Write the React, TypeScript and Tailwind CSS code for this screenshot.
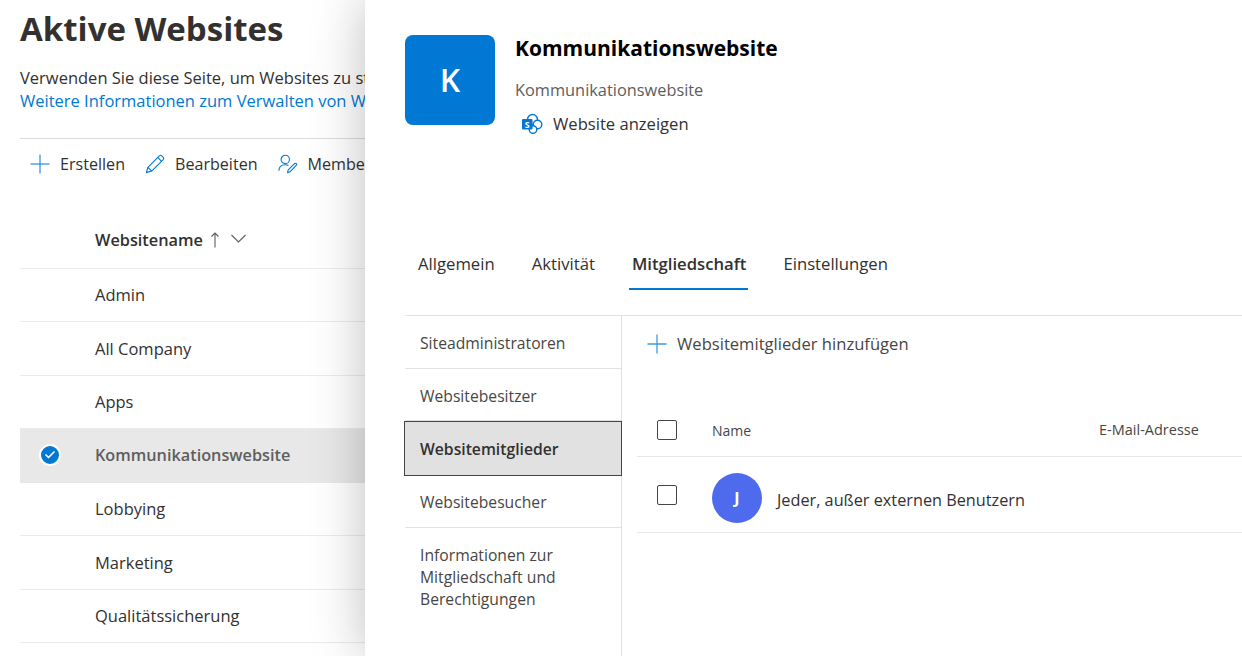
import React from "react";
import { Check } from "lucide-react";

const font = "font-['Open_Sans','Noto_Sans',sans-serif]";

function PlusIcon({ color = "#0078d4", width = 1 }: { color?: string; width?: number }) {
  return (
    <svg width="20" height="20" viewBox="0 0 20 20" className="shrink-0" stroke={color} strokeWidth={width} fill="none">
      <path d="M10 0.5 V19.5 M0.5 10 H19.5" />
    </svg>
  );
}

function Pencil() {
  return (
    <svg width="20" height="22" viewBox="0 0 22 22" fill="none" stroke="#0078d4" strokeWidth="1.2" strokeLinejoin="round" className="shrink-0">
      <path d="M1.5 20.5 L3.2 14.6 L15.8 2 Q17 1 18.2 1.8 L20.1 3.7 Q21 5 20 6.2 L7.4 18.8 Z" />
      <path d="M3.2 14.6 L7.4 18.8 M14 3.8 L18.2 8" />
    </svg>
  );
}

function MemberIcon() {
  return (
    <svg width="20" height="22" viewBox="0 0 22 22" fill="none" stroke="#0078d4" strokeWidth="1.2" strokeLinejoin="round" className="shrink-0">
      <circle cx="8" cy="6" r="4.6" />
      <path d="M1 18.5 C1 14 4 11.8 8 11.8 C9.4 11.8 10.5 12 11.5 12.6" />
      <path d="M10.5 20.5 L11.2 17.5 L18.5 10.4 Q19.4 9.8 20.2 10.6 Q21 11.5 20.3 12.3 L13.2 19.6 Z" />
    </svg>
  );
}

function SharePoint() {
  return (
    <svg width="22" height="22" viewBox="0 0 22 22" className="shrink-0">
      <circle cx="11.5" cy="6.5" r="5" fill="#ffffff" stroke="#0078d4" strokeWidth="1.4" />
      <circle cx="16.5" cy="11.5" r="4.3" fill="#ffffff" stroke="#0078d4" strokeWidth="1.4" />
      <circle cx="12" cy="16.5" r="3.8" fill="#ffffff" stroke="#0078d4" strokeWidth="1.4" />
      <rect x="1" y="6" width="10.5" height="10.5" rx="1" fill="#0078d4" />
      <text x="6.25" y="14.6" textAnchor="middle" fontSize="9" fontWeight="700" fill="#ffffff" fontFamily="Open Sans, sans-serif">S</text>
    </svg>
  );
}

function SortArrow() {
  return (
    <svg width="10" height="16" viewBox="0 0 10 16" fill="none" stroke="#605e5c" strokeWidth="1.1" className="ml-[7px] shrink-0">
      <path d="M5 15.5 V1 M1.5 4.5 L5 1 L8.5 4.5" />
    </svg>
  );
}

function Chevron() {
  return (
    <svg width="15" height="9" viewBox="0 0 15 9" fill="none" stroke="#605e5c" strokeWidth="1.1" className="mb-[2px] ml-[11px] shrink-0">
      <path d="M0.5 1 L7.5 8 L14.5 1" />
    </svg>
  );
}

function ToolbarItem({ icon, label }: { icon: React.ReactNode; label: string }) {
  return (
    <div className="flex items-center gap-[10px] whitespace-nowrap">
      {icon}
      <span>{label}</span>
    </div>
  );
}

const rows = ["Admin", "All Company", "Apps", "Kommunikationswebsite", "Lobbying", "Marketing", "Qualitätssicherung"];

function SiteRow({ name }: { name: string }) {
  const selected = name === "Kommunikationswebsite";
  return (
    <div
      className={`flex h-[53.5px] shrink-0 items-center whitespace-nowrap ${
        selected ? "bg-[#e8e8e8] pb-[1px] text-[16.25px] font-semibold text-[#605e5c]" : "border-b border-[#edebe9] pt-[2px] text-[16.5px] text-[#323130]"
      }`}
    >
      <div className="flex w-[75px] shrink-0 justify-center pr-[16px]">
        {selected && (
          <div className="flex h-[22px] w-[22px] items-center justify-center rounded-full border-2 border-white bg-[#0078d4]">
            <Check size={12} strokeWidth={3.5} color="#ffffff" />
          </div>
        )}
      </div>
      <span>{name}</span>
    </div>
  );
}

export default function App() {
  return (
    <div className={`flex h-[656px] w-[1242px] overflow-hidden bg-white ${font}`}>
      {/* Background page */}
      <div className="w-[365px] shrink-0 overflow-hidden pl-[20px]">
        <h1 className="mt-[7px] h-[44px] whitespace-nowrap text-[33px] font-bold leading-[44px] text-[#323130]">Aktive Websites</h1>
        <p className="mt-[15px] whitespace-nowrap text-[16.5px] leading-[23px] text-[#323130]">Verwenden Sie diese Seite, um Websites zu steuern.</p>
        <p className="whitespace-nowrap text-[16.5px] leading-[23px] text-[#0078d4]">Weitere Informationen zum Verwalten von Websites</p>
        <div className="mt-[26px] flex h-[52px] items-center gap-[20px] border-t border-[#dcdcdc] pb-[1px] pl-[10px] text-[16.1px] text-[#323130]">
          <ToolbarItem icon={<PlusIcon />} label="Erstellen" />
          <ToolbarItem icon={<Pencil />} label="Bearbeiten" />
          <ToolbarItem icon={<MemberIcon />} label="Membership" />
        </div>
        <div className="mt-[24px] flex h-[54.5px] items-center border-b border-[#edebe9] pb-[2px] pl-[75px] text-[16.3px] font-semibold text-[#323130]">
          <span className="whitespace-nowrap">Websitename</span>
          <SortArrow />
          <Chevron />
        </div>
        {rows.map((r) => (
          <SiteRow key={r} name={r} />
        ))}
      </div>

      {/* Side panel */}
      <div className="relative flex min-w-0 flex-1 flex-col bg-white shadow-[0_0_50px_rgba(0,0,0,0.26)]">
        <div className="flex h-[251px] shrink-0 gap-[20px] pl-[40px] pt-[35px]">
          <div className="flex h-[90px] w-[90px] shrink-0 items-center justify-center rounded-[8px] bg-[#0078d4] text-[32px] font-semibold text-white">K</div>
          <div>
            <div className="-mt-px text-[21px] font-bold leading-[28px] text-black">Kommunikationswebsite</div>
            <div className="mt-[16px] text-[16.35px] leading-[24px] text-[#605e5c]">Kommunikationswebsite</div>
            <div className="mt-[10px] flex items-center gap-[10px] pl-[6px] text-[16.6px] leading-[24px] text-[#323130]">
              <SharePoint />
              <span>Website anzeigen</span>
            </div>
          </div>
        </div>

        <div className="flex h-[64px] shrink-0 gap-[37px] pl-[53px] text-[16.7px] leading-[26px] text-[#323130]">
          <span>Allgemein</span>
          <span>Aktivität</span>
          <div className="relative font-semibold">
            Mitgliedschaft
            <div className="absolute -left-[3px] -right-[2px] top-[37px] h-[2px] bg-[#0078d4]" />
          </div>
          <span>Einstellungen</span>
        </div>

        <div className="ml-[40px] flex min-h-0 flex-1 border-t border-[#e1e1e1]">
          <div className="w-[217px] shrink-0 border-r border-[#e1e1e1] text-[15.7px] text-[#484644]">
            <div className="flex h-[53px] items-center border-b border-[#e1e1e1] pl-[15px] pt-[3px]">Siteadministratoren</div>
            <div className="flex h-[52px] items-center border-b border-[#e1e1e1] pl-[15px] pt-[4px]">Websitebesitzer</div>
            <div className="-ml-px -mr-px flex h-[55px] items-center border border-[#484644] bg-[#e1e1e1] pl-[15px] pt-[2px] font-semibold text-[#323130]">Websitemitglieder</div>
            <div className="flex h-[52px] items-center border-b border-[#e1e1e1] pl-[15px] pt-[2px]">Websitebesucher</div>
            <div className="pl-[15px] pt-[16px] leading-[22px]">
              Informationen zur<br />Mitgliedschaft und<br />Berechtigungen
            </div>
          </div>

          <div className="min-w-0 flex-1 pl-[15px]">
            <div className="flex h-[56px] items-center gap-[10px] pl-[10px] text-[16.6px] text-[#484644]">
              <PlusIcon color="#3f9ae0" width={1.3} />
              <span>Websitemitglieder hinzufügen</span>
            </div>
            <div className="mt-[27px] flex h-[58px] items-center border-b border-[#e8e8e8] pl-[20px] pt-[5px] text-[14px] text-[#484644]">
              <div className="h-[20px] w-[20px] shrink-0 rounded-[2px] border border-[#484644]" />
              <span className="ml-[35px] w-[387px] shrink-0">Name</span>
              <span className="whitespace-nowrap text-[14.5px]">E-Mail-Adresse</span>
            </div>
            <div className="flex h-[76px] items-center border-b border-[#e8e8e8] pl-[20px]">
              <div className="h-[20px] w-[20px] shrink-0 rounded-[2px] border border-[#484644]" />
              <div className="ml-[35px] mt-[7px] flex h-[50px] w-[50px] shrink-0 items-center justify-center rounded-full bg-[#4f6bed] text-[16px] font-bold text-white">J</div>
              <span className="ml-[15px] mt-[12px] whitespace-nowrap text-[16.25px] text-[#323130]">Jeder, außer externen Benutzern</span>
            </div>
          </div>
        </div>
      </div>
    </div>
  );
}
